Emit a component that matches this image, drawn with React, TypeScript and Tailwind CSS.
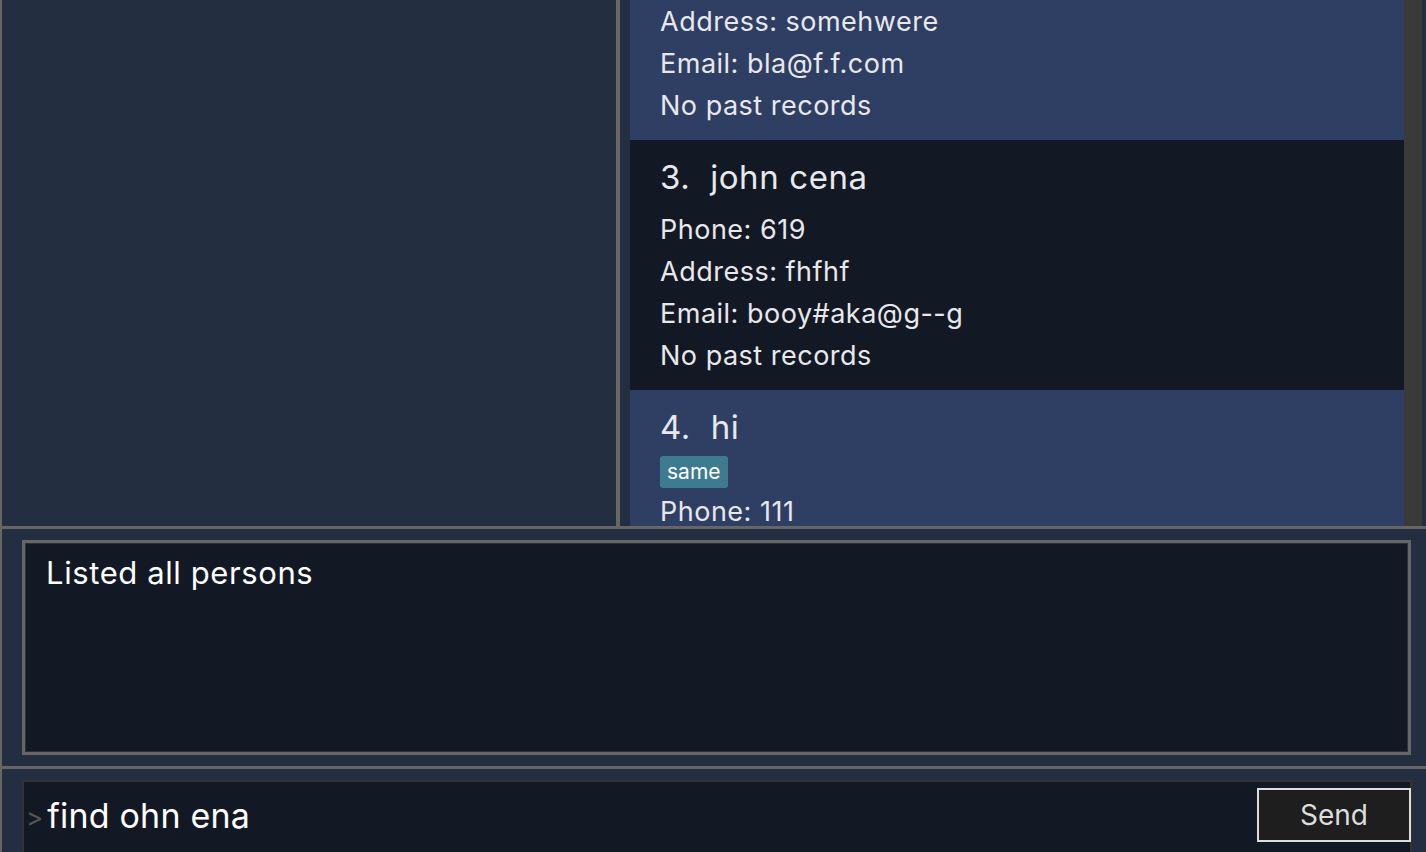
const PERSONS = [
  { name: "Alex Yeoh", tags: [] as string[], phone: "87438807", address: "Blk 30 Geylang Street 29", email: "alexyeoh@example.com" },
  { name: "bob", tags: [], phone: "123", address: "somehwere", email: "bla@f.f.com" },
  { name: "john cena", tags: [], phone: "619", address: "fhfhf", email: "booy#aka@g--g" },
  { name: "hi", tags: ["same"], phone: "111", address: "here", email: "hi@hi.com" },
];

function PersonCard({ index, name, tags, phone, address, email }: { index: number; name: string; tags: string[]; phone: string; address: string; email: string }) {
  const odd = index % 2 === 0;
  return (
    <div className={`${odd ? "bg-[#131924]" : "bg-[#2e3f63]"} pl-[30px] pt-4 pb-[13px] text-[#e8e8ec]`}>
      <div className="h-[44px] flex items-center text-[33px] tracking-[0.6px] whitespace-pre">
        {index + 1}.{"  "}{name}
      </div>
      {tags.length > 0 && (
        <div className="flex gap-2 mt-[6px] mb-[3px]">
          {tags.map((t) => (
            <span key={t} className="h-[32px] px-[7px] flex items-center rounded-[3px] bg-[#3e7b91] text-[21px] text-white">
              {t}
            </span>
          ))}
        </div>
      )}
      <div className={`${tags.length > 0 ? "" : "mt-[9px]"} text-[27px] tracking-[0.5px] leading-[42px]`}>
        <div>Phone: {phone}</div>
        <div>Address: {address}</div>
        <div>Email: {email}</div>
        <div>No past records</div>
      </div>
    </div>
  );
}

export default function App() {
  return (
    <div
      className="w-[1426px] h-[852px] overflow-hidden bg-[#232e40] border-l-2 border-[#666] flex flex-col"
      style={{ fontFamily: "Inter, 'Noto Sans', sans-serif" }}
    >
      {/* top: side panel + person list */}
      <div className="h-[526px] flex shrink-0">
        <div className="w-[614px] border-r-4 border-[#666] box-content" />
        <div className="w-[10px]" />
        <div className="w-[774px] overflow-hidden">
          <div className="-mt-[360px]">
            {PERSONS.map((p, i) => (
              <PersonCard key={i} index={i} {...p} />
            ))}
          </div>
        </div>
        <div className="w-[18px] bg-[#3a3a3a]" />
      </div>

      <div className="h-[3px] bg-[#666] shrink-0" />

      {/* result display */}
      <div className="h-[237px] shrink-0 pt-[11px] pb-[11px] pl-[20px] pr-[15px]">
        <div className="h-full border-[3px] border-[#666] bg-[#131924]">
          <div className="h-full border border-[#2a3242] pl-[20px] pt-[6px] text-[31px] tracking-[0.6px] text-white">
            Listed all persons
          </div>
        </div>
      </div>

      <div className="h-[3px] bg-[#666] shrink-0" />

      {/* command box */}
      <div className="flex-1 pt-[11px] pl-[20px] pr-[14px]">
        <div className="h-full border-t-2 border-l-2 border-r-2 border-[#333] bg-[#131924] flex items-start">
          <div className="flex-1 flex items-center h-[58px] mt-[4px]">
            <span className="text-[26px] text-[#555] pl-[2px] pr-[4px] mt-[4px]">&gt;</span>
            <span className="text-[34px] tracking-[0.2px] text-white">find ohn ena</span>
          </div>
          <button className="w-[154px] h-[54px] mt-[6px] -mr-[1px] border-2 border-[#ddd] bg-[#1e1e1e] text-[28px] text-[#ddd]">
            Send
          </button>
        </div>
      </div>
    </div>
  );
}
